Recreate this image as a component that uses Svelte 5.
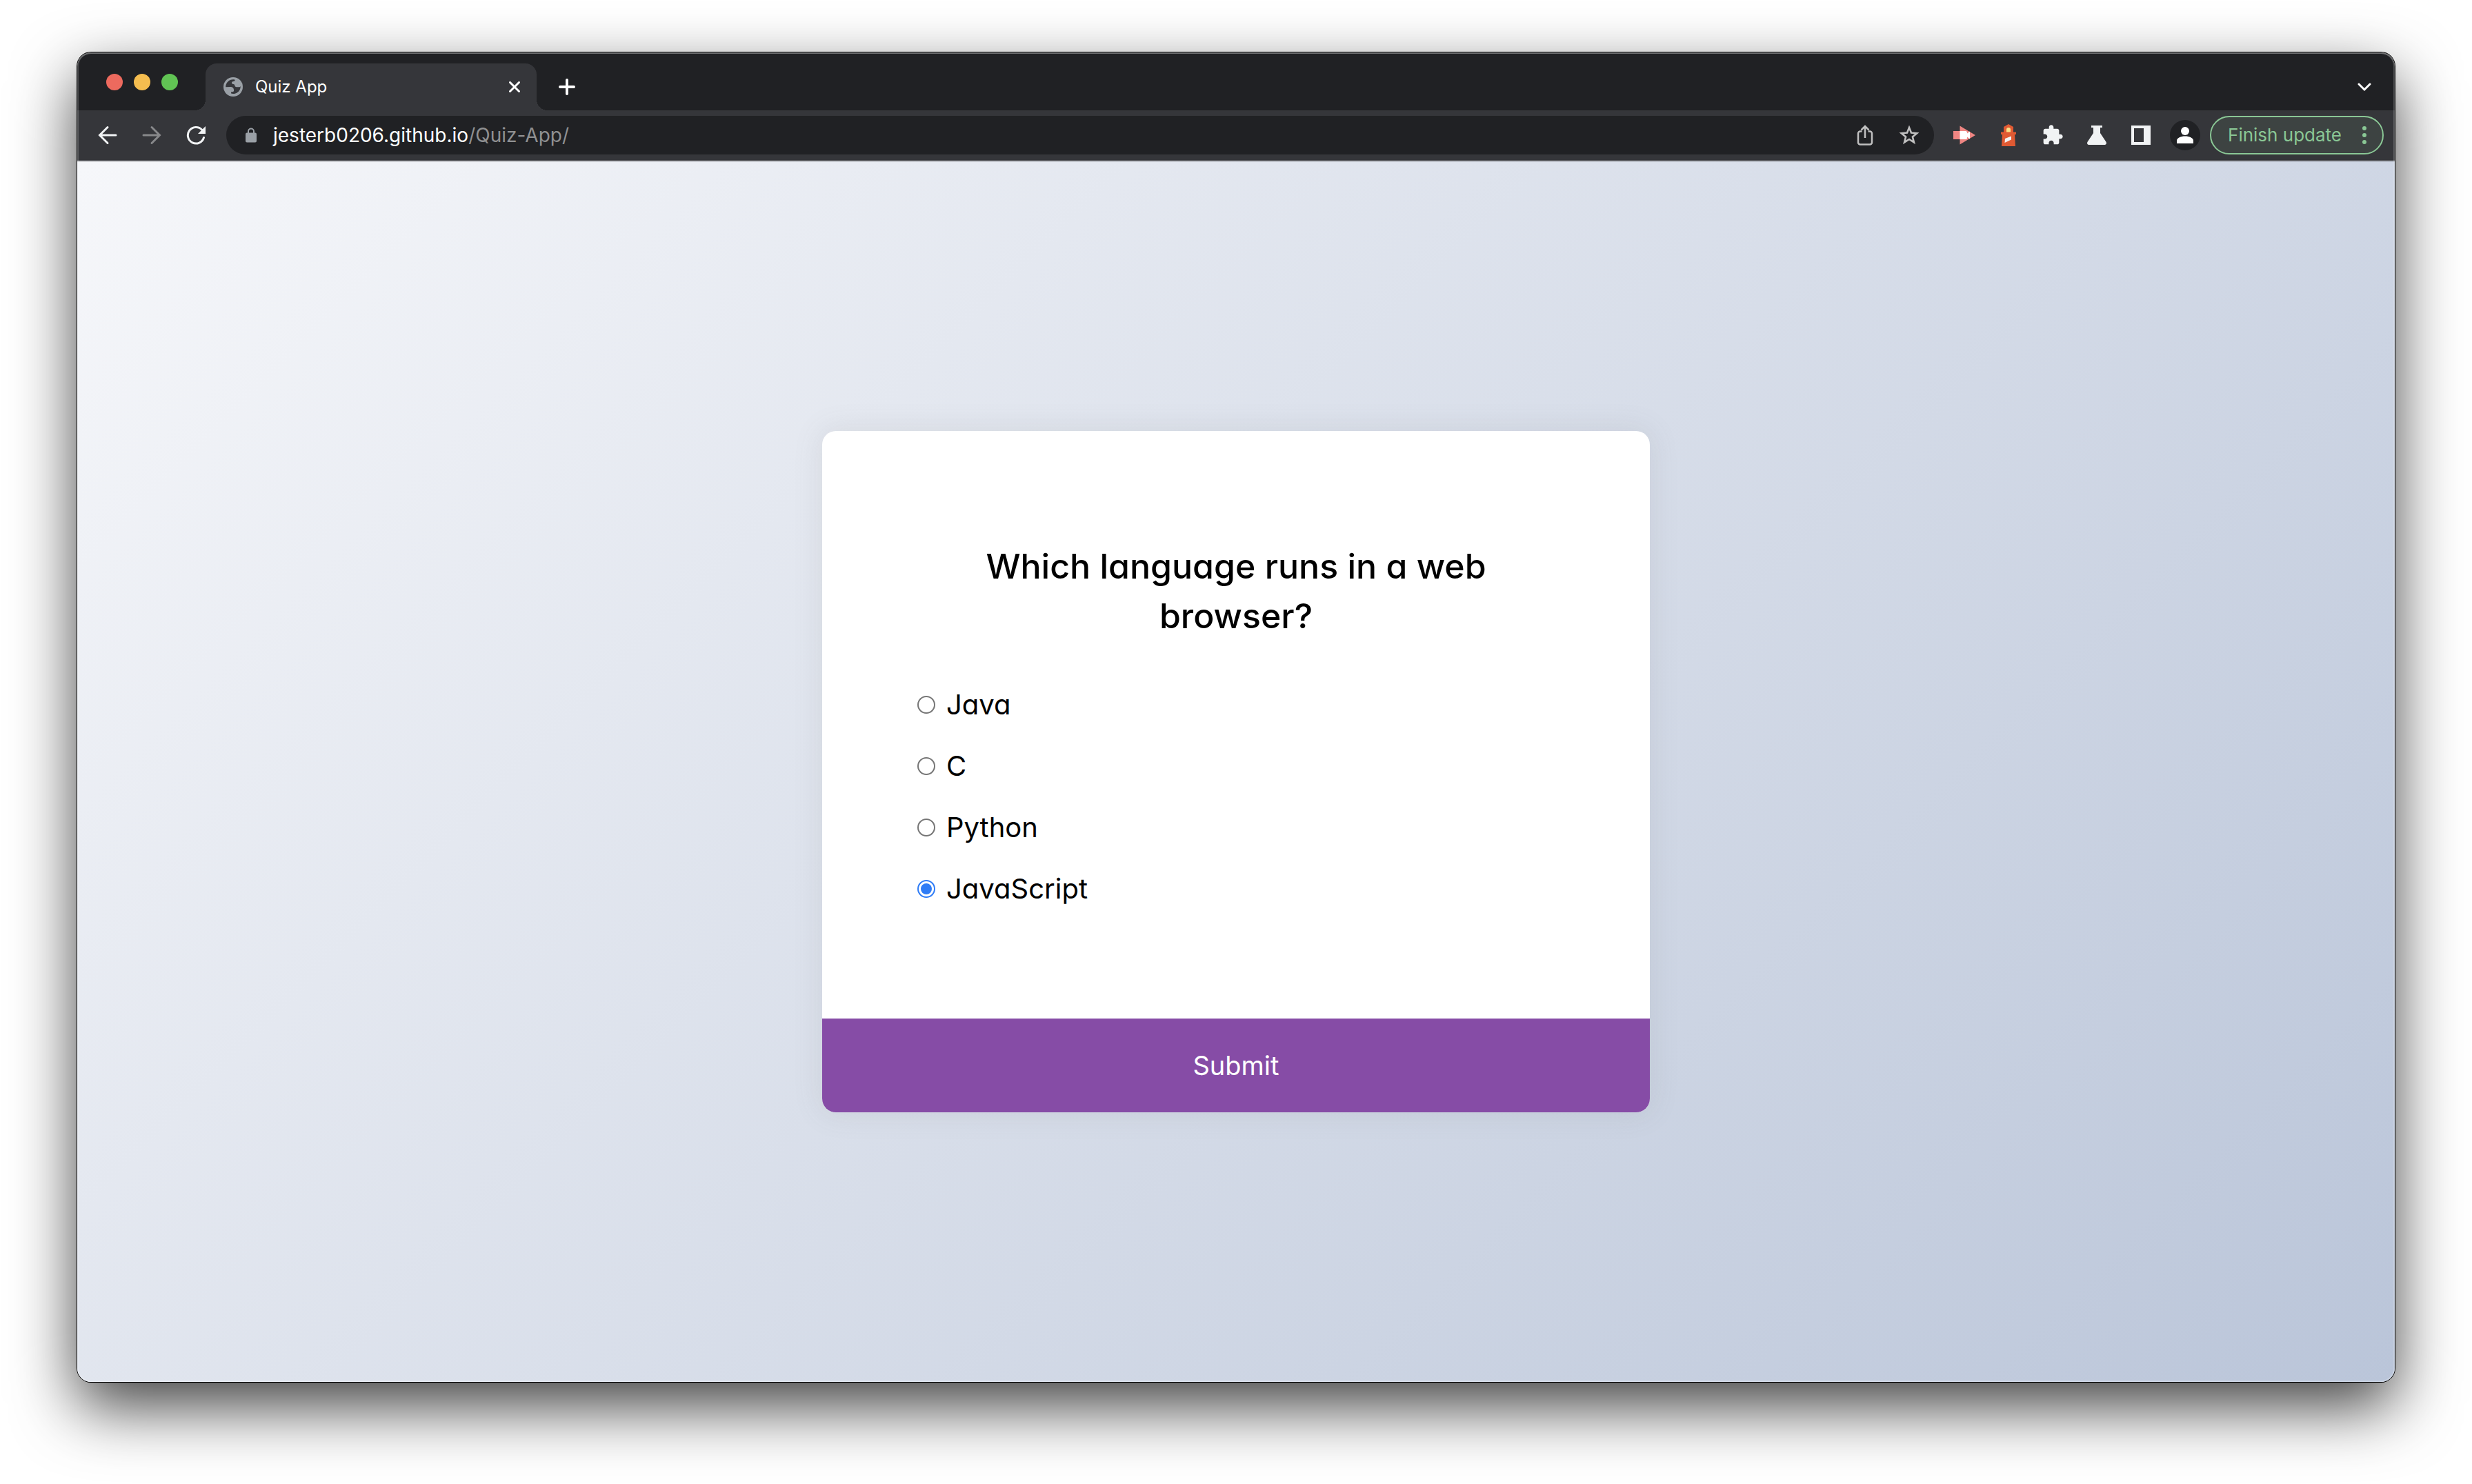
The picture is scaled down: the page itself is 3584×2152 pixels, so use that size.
<script>
  const options = ['Java', 'C', 'Python', 'JavaScript'];
  let answer = $state('JavaScript');
</script>

<div class="desktop">
  <div class="window">
    <header class="tabstrip">
      <div class="lights">
        <button class="light close" aria-label="Close window"></button>
        <button class="light minimise" aria-label="Minimise window"></button>
        <button class="light zoom" aria-label="Zoom window"></button>
      </div>
      <div class="tab">
        <svg class="globe" viewBox="0 0 28 28" aria-hidden="true">
          <circle cx="14" cy="14" r="14" fill="#9aa0a6" />
          <path
            d="M3.2 14.2C3.2 8 8 3.2 14 3.2c1.4 0 2 .2 2.800.600-.2 1.800-1.200 2.200-2.200 2.200-1.600 0-2.600.9-2.600 2.300 0 1.300.9 1.700 2.300 1.700 1.300 0 1.900.8 2.100 2 .2 1.300 1 2.200 2.500 2.200h3.800c.9 0 1.500-.5 2-1.300.1 6-4 10.200-9.200 11-1.500.300-3.200.100-4.400-.300v-2.400h1.800c1.400 0 2.200-1 2.200-2.300 0-2.800-2-4.800-4.800-4.800z"
            fill="#35363a"
          />
        </svg>
        <span class="title">Quiz App</span>
        <button class="tab-close" aria-label="Close tab">
          <svg width="16" height="16" viewBox="0 0 16 16"><path d="M1.500 1.500l13 13M14.500 1.500l-13 13" class="line" /></svg>
        </button>
      </div>
      <button class="strip-button" aria-label="New tab">
        <svg width="24" height="24" viewBox="0 0 24 24"><path d="M12 2v20M2 12h20" class="line bold" /></svg>
      </button>
      <button class="strip-button search" aria-label="Search tabs">
        <svg width="20" height="14" viewBox="0 0 20 14"><path d="M2 3l8 8 8-8" class="line" /></svg>
      </button>
    </header>

    <nav class="toolbar" aria-label="Browser toolbar">
      <button class="tool" aria-label="Back">
        <svg width="28" height="28" viewBox="0 0 28 28"><path d="M26 14H3M14 2.500L2.500 14 14 25.500" class="line" /></svg>
      </button>
      <button class="tool dim" aria-label="Forward">
        <svg width="28" height="28" viewBox="0 0 28 28"><path d="M2 14h23M14 2.500L25.500 14 14 25.500" class="line" /></svg>
      </button>
      <button class="tool" aria-label="Reload">
        <svg width="28" height="28" viewBox="0 0 28 28">
          <path d="M25.500 17.500A11.800 11.800 0 1 1 22.800 6.200" class="line" />
          <path d="M28 1v11H17z" fill="currentColor" />
        </svg>
      </button>

      <div class="omnibox">
        <svg class="lock" width="16" height="22" viewBox="0 0 16 22" aria-hidden="true">
          <path d="M4 9V5.500a4 4 0 0 1 8 0V9" fill="none" stroke="#9aa0a6" stroke-width="2" />
          <rect y="7.500" width="16" height="14" rx="2" fill="#9aa0a6" />
        </svg>
        <a class="url" href="https://jesterb0206.github.io/Quiz-App/">jesterb0206.github.io<span>/Quiz-App/</span></a>
        <button class="tool soft" aria-label="Share">
          <svg width="24" height="30" viewBox="0 0 24 30">
            <path d="M7.500 9.500H5A3 3 0 0 0 2 12.500v13a3 3 0 0 0 3 3h14a3 3 0 0 0 3-3v-13a3 3 0 0 0-3-3h-2.500M12 19V3M6.500 7.500L12 2l5.500 5.500" fill="none" stroke="currentColor" stroke-width="2.500" />
          </svg>
        </button>
        <button class="tool soft" aria-label="Bookmark this tab">
          <svg width="30" height="30" viewBox="0 0 30 30">
            <path d="M15 4l3 7.500 8.200.7-6.300 5.200 2 8L15 21l-6.900 4.400 2-8-6.300-5.200 8.200-.7z" fill="none" stroke="currentColor" stroke-width="2.600" />
          </svg>
        </button>
      </div>

      <button class="tool" aria-label="Recorder extension">
        <svg width="32" height="28" viewBox="0 0 32 28">
          <path d="M0 8h9.500V0.500L32 14 9.500 27.500V20H0z" fill="#ef8683" />
          <path d="M9.500 8h9a3 3 0 0 1 1.500 3.500L24 8.500v11L20 16.500A3 3 0 0 1 18.500 20h-9z" fill="#fff" />
        </svg>
      </button>
      <button class="tool" aria-label="Lighthouse extension">
        <svg width="22" height="32" viewBox="0 0 22 32">
          <path d="M11 0l7 4v7.500h4V15h-2l1 17H1l1-17H0v-3.500h4V4z" fill="#e05a33" />
          <path d="M8 11.500V8a3 3 0 0 1 6 0v3.500z" fill="#fbe287" />
          <path d="M6 21l9-3.500v5L5.500 27z" fill="#f2f2f2" />
        </svg>
      </button>
      <button class="tool" aria-label="Extensions">
        <svg width="32" height="32" viewBox="0 0 24 24">
          <path d="M20.500 11H19V7c0-1.100-.9-2-2-2h-4V3.500C13 2.120 11.880 1 10.500 1S8 2.120 8 3.500V5H4c-1.100 0-1.990.9-1.990 2v3.800H3.500c1.490 0 2.700 1.210 2.700 2.700s-1.210 2.700-2.700 2.700H2V20c0 1.100.9 2 2 2h3.800v-1.500c0-1.490 1.210-2.700 2.700-2.700 1.490 0 2.700 1.210 2.700 2.700V22H17c1.100 0 2-.9 2-2v-4h1.500c1.380 0 2.500-1.120 2.500-2.500S21.880 11 20.500 11z" fill="currentColor" />
        </svg>
      </button>
      <button class="tool" aria-label="Experiments">
        <svg width="28" height="28" viewBox="0 0 28 28">
          <path d="M6 0h16v3h-3v8l8.300 12.500C28.800 26 27.500 28 25.500 28h-23C.5 28-.8 26 .7 23.500L9 11V3H6z" fill="currentColor" />
        </svg>
      </button>
      <button class="tool" aria-label="Side panel">
        <svg width="28" height="28" viewBox="0 0 28 28"><path d="M0 0h28v28H0zM4 4v20h14V4z" fill-rule="evenodd" fill="currentColor" /></svg>
      </button>
      <button class="tool" aria-label="Profile">
        <svg width="44" height="44" viewBox="0 0 44 44">
          <circle cx="22" cy="22" r="22" fill="#202124" />
          <circle cx="22" cy="16" r="6" fill="#fff" />
          <path d="M10 34v-4c0-4 6-6.500 12-6.500s12 2.500 12 6.500v4z" fill="#fff" />
        </svg>
      </button>
      <button class="update">
        Finish update
        <svg width="6" height="26" viewBox="0 0 6 26" aria-hidden="true">
          <circle cx="3" cy="3" r="3" fill="currentColor" />
          <circle cx="3" cy="13" r="3" fill="currentColor" />
          <circle cx="3" cy="23" r="3" fill="currentColor" />
        </svg>
      </button>
    </nav>

    <main class="page">
      <form class="card" onsubmit={(e) => e.preventDefault()}>
        <div class="body">
          <h2>Which language runs in a web browser?</h2>
          <ul>
            {#each options as option}
              <li>
                <label>
                  <input type="radio" name="answer" value={option} bind:group={answer} />
                  {option}
                </label>
              </li>
            {/each}
          </ul>
        </div>
        <button class="submit" type="submit">Submit</button>
      </form>
    </main>
  </div>
</div>

<style>
  :global(body) {
    margin: 0;
    background: #fff;
  }

  button {
    display: flex;
    align-items: center;
    justify-content: center;
    margin: 0;
    padding: 0;
    border: 0;
    background: none;
    color: inherit;
    font: inherit;
  }

  svg {
    display: block;
    flex: none;
  }

  .line {
    fill: none;
    stroke: currentColor;
    stroke-width: 3;
    stroke-linecap: round;
  }

  .line.bold {
    stroke-width: 4;
  }

  .desktop {
    display: flex;
    box-sizing: border-box;
    min-height: 100vh;
    padding: 76px 112px 148px;
    overflow: hidden;
    font-family: Inter, 'Liberation Sans', sans-serif;
  }

  .window {
    position: relative;
    display: flex;
    flex: 1;
    flex-direction: column;
    overflow: hidden;
    border-radius: 20px;
    box-shadow:
      0 0 0 1px #000,
      0 36px 92px rgba(0, 0, 0, 0.74);
  }

  .window::after {
    position: absolute;
    inset: 0;
    border-radius: 20px;
    box-shadow:
      inset 0 0 0 2px rgba(255, 255, 255, 0.2),
      inset 0 2px 0 rgba(255, 255, 255, 0.2);
    content: '';
    pointer-events: none;
  }

  .tabstrip {
    display: flex;
    align-items: flex-end;
    height: 84px;
    padding: 0 16px 0 42px;
    background: #202124;
    color: #fff;
  }

  .lights {
    display: flex;
    align-items: center;
    gap: 16px;
    height: 82px;
    margin-right: 40px;
  }

  .light {
    width: 24px;
    height: 24px;
    border-radius: 50%;
  }

  .close {
    background: #ed6a5e;
  }

  .minimise {
    background: #f5bd4f;
  }

  .zoom {
    background: #61c454;
  }

  .tab {
    position: relative;
    display: flex;
    align-items: center;
    box-sizing: border-box;
    width: 480px;
    height: 68px;
    padding: 0 16px 0 26px;
    border-radius: 16px 16px 0 0;
    background: #35363a;
  }

  .tab::before,
  .tab::after {
    position: absolute;
    bottom: 0;
    width: 16px;
    height: 16px;
    content: '';
  }

  .tab::before {
    right: 100%;
    background: radial-gradient(circle at 0 0, transparent 16px, #35363a 16px);
  }

  .tab::after {
    left: 100%;
    background: radial-gradient(circle at 100% 0, transparent 16px, #35363a 16px);
  }

  .globe {
    width: 28px;
    height: 28px;
    margin-right: 18px;
  }

  .title {
    flex: 1;
    font-size: 24px;
    line-height: 32px;
  }

  .tab-close {
    width: 32px;
    height: 32px;
  }

  .strip-button {
    width: 56px;
    height: 68px;
    margin-left: 16px;
  }

  .search {
    margin-left: auto;
  }

  .toolbar {
    display: flex;
    align-items: center;
    height: 72px;
    padding: 0 16px 0 12px;
    border-bottom: 2px solid #5d5e62;
    background: #35363a;
    color: #f1f3f4;
  }

  .tool {
    width: 64px;
    height: 56px;
  }

  .dim {
    color: #87888a;
  }

  .soft {
    color: #c0c0c0;
  }

  .omnibox {
    display: flex;
    flex: 1;
    align-items: center;
    height: 56px;
    margin: 0 12px;
    padding: 0 4px 0 28px;
    border-radius: 28px;
    background: #202124;
  }

  .lock {
    margin-right: 24px;
  }

  .url {
    flex: 1;
    color: #fff;
    font-size: 28px;
    line-height: 36px;
    text-decoration: none;
  }

  .url span {
    color: #8f9092;
  }

  .update {
    gap: 30px;
    height: 56px;
    margin-left: 4px;
    padding: 0 23px 0 24px;
    border: 2px solid #8ac795;
    border-radius: 28px;
    background: #3d4342;
    color: #8ac795;
    font-size: 26px;
    line-height: 32px;
  }

  .page {
    display: grid;
    flex: 1;
    place-items: center;
    background: linear-gradient(135deg, #f6f7fa, #bac5d9);
    color: #000;
    font-feature-settings: 'cv11';
  }

  .card {
    width: 1200px;
    overflow: hidden;
    border-radius: 20px;
    background: #fff;
    box-shadow: 0 0 40px 4px rgba(100, 100, 100, 0.1);
  }

  .body {
    padding: 128px;
  }

  h2 {
    margin: 0;
    padding: 32px;
    font-size: 50px;
    font-weight: 500;
    line-height: 72px;
    text-align: center;
  }

  ul {
    margin: 0;
    padding: 16px 0;
    list-style: none;
  }

  li {
    padding: 16px 0;
  }

  label {
    display: flex;
    align-items: center;
    gap: 16px;
    padding-left: 10px;
    font-size: 40px;
    line-height: 57px;
  }

  input {
    box-sizing: border-box;
    width: 26px;
    height: 26px;
    margin: 0;
    appearance: none;
    border: 2px solid #767676;
    border-radius: 50%;
    background: #fff;
  }

  input:checked {
    padding: 3px;
    border-color: #2f7cf6;
    background: #2f7cf6 content-box;
  }

  .submit {
    width: 100%;
    height: 136px;
    background: #864ca6;
    color: #fff;
    font-size: 38px;
    line-height: 54px;
  }
</style>
